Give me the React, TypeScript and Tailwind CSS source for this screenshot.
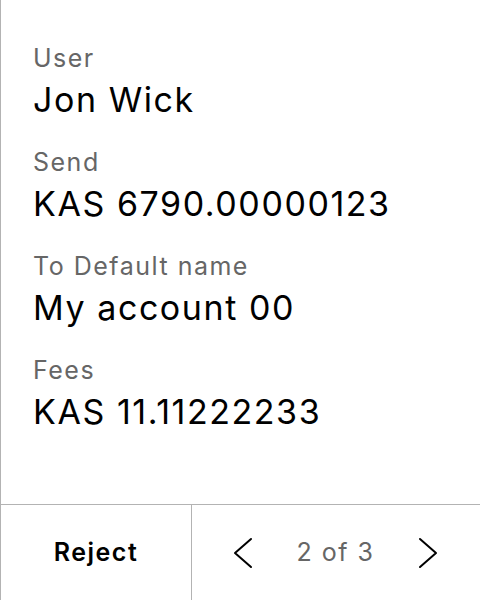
import React from "react";

const rows = [
  { label: "User", value: "Jon Wick" },
  { label: "Send", value: "KAS 6790.00000123" },
  { label: "To Default name", value: "My account 00" },
  { label: "Fees", value: "KAS 11.11222233" },
];

export default function App() {
  return (
    <div
      className="w-[480px] h-[600px] bg-white border-l border-[#b3b3b3] flex flex-col"
      style={{ fontFamily: "Inter, 'Noto Sans', sans-serif" }}
    >
      <div className="flex-1 flex flex-col pl-[32px] pt-[42px] gap-[26px]">
        {rows.map((r) => (
          <div key={r.label} className="flex flex-col gap-[6px]">
            <div className="text-[25px] leading-[32px] tracking-[0.06em] text-[#666666]">{r.label}</div>
            <div className="text-[34px] leading-[40px] tracking-[0.046em] text-black">{r.value}</div>
          </div>
        ))}
      </div>
      <div className="h-[96px] border-t border-[#b3b3b3] flex">
        <div className="w-[191px] border-r border-[#b3b3b3] flex items-center justify-center text-[25px] tracking-[0.06em] font-semibold text-black">
          Reject
        </div>
        <div className="flex-1 flex items-center justify-between pl-[41px] pr-[42px]">
          <svg width="20" height="32" viewBox="0 0 20 32" fill="none">
            <path d="M18 2 L2 16 L18 30" stroke="black" strokeWidth="2" strokeLinecap="round" strokeLinejoin="round" />
          </svg>
          <span className="text-[25px] tracking-[0.06em] text-[#666666]">2 of 3</span>
          <svg width="20" height="32" viewBox="0 0 20 32" fill="none">
            <path d="M2 2 L18 16 L2 30" stroke="black" strokeWidth="2" strokeLinecap="round" strokeLinejoin="round" />
          </svg>
        </div>
      </div>
    </div>
  );
}
